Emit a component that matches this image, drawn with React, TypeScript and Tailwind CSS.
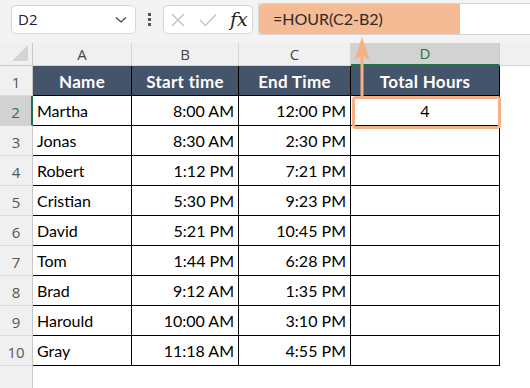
import React from "react";

const rows = [
  { name: "Martha", start: "8:00 AM", end: "12:00 PM", total: "4" },
  { name: "Jonas", start: "8:30 AM", end: "2:30 PM", total: "" },
  { name: "Robert", start: "1:12 PM", end: "7:21 PM", total: "" },
  { name: "Cristian", start: "5:30 PM", end: "9:23 PM", total: "" },
  { name: "David", start: "5:21 PM", end: "10:45 PM", total: "" },
  { name: "Tom", start: "1:44 PM", end: "6:28 PM", total: "" },
  { name: "Brad", start: "9:12 AM", end: "1:35 PM", total: "" },
  { name: "Harould", start: "10:00 AM", end: "3:10 PM", total: "" },
  { name: "Gray", start: "11:18 AM", end: "4:55 PM", total: "" },
];

const cols = [
  { key: "A", w: "w-[99px]" },
  { key: "B", w: "w-[107px]" },
  { key: "C", w: "w-[112px]" },
  { key: "D", w: "w-[149px]" },
];

const uiFont = { fontFamily: '"Open Sans", "Noto Sans", sans-serif' };
const cellFont = { fontFamily: 'Lato, "Liberation Sans", sans-serif' };

function Toolbar() {
  return (
    <div className="flex h-[36px] bg-[#f3f3f3]" style={uiFont}>
      <div className="ml-[11px] mt-[5px] flex h-[29px] w-[125px] items-center justify-between rounded-[5px] border border-[#d6d6d6] bg-white pl-[6px] pr-[8px]">
        <span className="text-[15px] text-[#222]">D2</span>
        <svg width="12" height="8" viewBox="0 0 12 8">
          <path d="M1 1.5 L6 6 L11 1.5" fill="none" stroke="#444" strokeWidth="1.3" />
        </svg>
      </div>
      <div className="flex w-[27px] flex-col items-center justify-center gap-[2px] pt-[2px]">
        <span className="h-[3px] w-[3px] bg-[#555]" />
        <span className="h-[3px] w-[3px] bg-[#555]" />
        <span className="h-[3px] w-[3px] bg-[#555]" />
      </div>
      <div className="mt-[5px] flex h-[29px] w-[90px] items-center rounded-[5px] border border-[#d6d6d6] bg-white pl-[7px]">
        <svg width="14" height="14" viewBox="0 0 14 14">
          <path d="M1 1 L13 13 M13 1 L1 13" stroke="#bdbdbd" strokeWidth="1.2" />
        </svg>
        <svg width="18" height="14" viewBox="0 0 18 14" className="ml-[14px]">
          <path d="M1 7 L6.5 12.5 L17 1.5" fill="none" stroke="#bdbdbd" strokeWidth="1.2" />
        </svg>
        <span
          className="ml-[13px] text-[19px] italic leading-none text-[#222]"
          style={{ fontFamily: '"DejaVu Serif", "Liberation Serif", serif' }}
        >
          fx
        </span>
      </div>
      <div className="ml-[5px] mt-[3px] flex h-[32px] flex-1 border-y border-l border-[#d6d6d6] bg-white">
        <div
          className="flex w-[201px] items-center rounded-l-[3px] bg-[#f4bb95] pl-[14px] text-[16px] text-[#2b2b2b]"
          style={cellFont}
        >
          =HOUR(C2-B2)
        </div>
      </div>
    </div>
  );
}

function ColumnHeaders() {
  return (
    <div className="flex h-[23px] bg-[#f0f0f0] text-[15px] text-[#444]" style={uiFont}>
      <div className="relative w-[33px] border-r border-b border-[#c8c8c8]">
        <svg width="18" height="18" viewBox="0 0 18 18" className="absolute bottom-[3px] right-[3px]">
          <path d="M17 1 L17 17 L1 17 Z" fill="#d4d4d4" />
        </svg>
      </div>
      {cols.map((c) =>
        c.key === "D" ? (
          <div
            key={c.key}
            className={`${c.w} flex items-center justify-center border-r border-b-2 border-r-[#c8c8c8] border-b-[#217346] bg-[#d2d2d2] text-[#217346]`}
          >
            {c.key}
          </div>
        ) : (
          <div key={c.key} className={`${c.w} flex items-center justify-center border-r border-b border-[#d4d4d4]`}>
            {c.key}
          </div>
        )
      )}
      <div className="flex-1 border-b border-[#d4d4d4]" />
    </div>
  );
}

function RowHeader({ n, active }: { n: number; active?: boolean }) {
  return (
    <div
      className={`flex w-[33px] items-end justify-center pb-[2px] text-[15px] text-[#555] ${
        active ? "border-r-2 border-b border-r-[#217346] border-b-[#d4d4d4] bg-[#d2d2d2] text-[#217346]" : "border-r border-b border-r-[#c8c8c8] border-b-[#dcdcdc] bg-[#f0f0f0]"
      }`}
      style={uiFont}
    >
      {n}
    </div>
  );
}

export default function App() {
  return (
    <div className="relative h-[388px] w-[530px] overflow-hidden bg-white">
      <Toolbar />
      <div className="h-[7px] bg-[#f3f3f3]" />
      <ColumnHeaders />

      {/* header row of the table */}
      <div className="flex h-[30px]">
        <RowHeader n={1} />
        {["Name", "Start time", "End Time", "Total Hours"].map((t, i) => (
          <div
            key={t}
            className={`${cols[i].w} flex items-end justify-center border-r border-b border-black bg-[#44546a] pb-[1px] text-[17px] font-bold tracking-[0.3px] text-white`}
            style={cellFont}
          >
            {t}
          </div>
        ))}
      </div>

      {rows.map((r, i) => (
        <div key={r.name} className="flex h-[30px] text-[16px] text-black" style={cellFont}>
          <RowHeader n={i + 2} active={i === 0} />
          <div className="flex w-[99px] items-end border-r border-b border-black pb-[2px] pl-[4px]">{r.name}</div>
          <div className="flex w-[107px] items-end justify-end border-r border-b border-black pb-[2px] pr-[4px]">{r.start}</div>
          <div className="flex w-[112px] items-end justify-end border-r border-b border-black pb-[2px] pr-[4px]">{r.end}</div>
          <div className="flex w-[149px] items-end justify-center border-r border-b border-black pb-[2px]">{r.total}</div>
        </div>
      ))}

      <div className="flex h-[40px]">
        <div className="w-[33px] border-r border-[#c8c8c8] bg-[#f0f0f0]" />
      </div>

      {/* highlight around D2 */}
      <div className="absolute left-[352px] top-[96px] h-[33px] w-[149px] rounded-[4px] border-[3px] border-[#f4b183]" />

      {/* arrow from the cell up to the formula */}
      <svg className="absolute left-[352px] top-[36px]" width="20" height="62" viewBox="0 0 20 62">
        <path d="M10 18 L10 61" stroke="#f4b183" strokeWidth="3" />
        <path d="M10 1 L17.5 24 L10 19 L2.5 24 Z" fill="#f4b183" />
      </svg>
    </div>
  );
}
